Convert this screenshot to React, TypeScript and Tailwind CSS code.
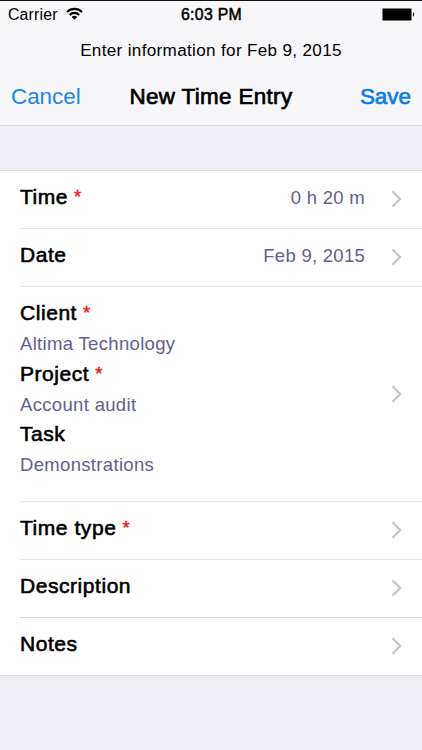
import type { ReactNode } from 'react'

interface FieldProps {
  label: string
  required?: boolean
}

interface RowProps {
  children: ReactNode
  value?: string
  divider?: string
  tall?: boolean
}

const Chevron = () => (
  <svg
    className="mb-px h-[18px] w-[12px] shrink-0"
    viewBox="0 0 12 18"
    fill="none"
    stroke="#c5c5ca"
    strokeWidth="2.3"
    aria-hidden="true"
  >
    <path d="M1.5 1.2 9.2 9 1.5 16.8" />
  </svg>
)

const WifiIcon = () => (
  <svg className="-mt-[3px] h-[13px] w-[17px]" viewBox="0 0 17 13" aria-hidden="true">
    <g fill="none" stroke="#000" strokeWidth="2.1">
      <path d="M1 4.9a10.7 10.7 0 0 1 15 0" />
      <path d="M3.7 7.9a6.8 6.8 0 0 1 9.6 0" />
    </g>
    <path d="M5.7 10a4 4 0 0 1 5.6 0L8.5 12.8z" />
  </svg>
)

const BatteryIcon = () => (
  <svg className="-mt-px h-[13px] w-[33px]" viewBox="0 0 33 13" aria-hidden="true">
    <rect x="0.5" y="0.5" width="29" height="12" rx="1" fill="#000" stroke="#77777a" />
    <path d="M31 4.3c1.5.6 1.5 3.8 0 4.4z" />
  </svg>
)

const Field = ({ label, required }: FieldProps) => (
  <div className="text-[21px] leading-[30px] tracking-[0.55px] [-webkit-text-stroke:0.6px_#000]">
    {label}
    {required && (
      <span className="ml-[6px] align-[1px] text-[18.5px] leading-none text-[#f01820] [-webkit-text-stroke:0.5px_#f01820]">
        *
      </span>
    )}
  </div>
)

const FieldValue = ({ children }: { children: ReactNode }) => (
  <div className="pt-px text-[18.5px] leading-[29.5px] tracking-[0.33px] text-[#645e91]">
    {children}
  </div>
)

const Row = ({ children, value, divider = 'border-[#e6e6e9]', tall }: RowProps) => (
  <div
    className={
      'ml-5 flex justify-between border-b pr-[19px] ' +
      (tall ? 'h-[215px] ' : 'h-[58px] ') +
      divider
    }
  >
    <div className="pt-[11px]">{children}</div>
    <div className="flex items-center">
      {value && (
        <span className="mr-[26px] -mt-[3px] text-[18.5px] tracking-[0.27px] text-[#645e91]">
          {value}
        </span>
      )}
      <Chevron />
    </div>
  </div>
)

const App = () => {
  return (
    <div className="h-[750px] w-[422px] overflow-hidden bg-[#efeef4] font-['Liberation_Sans',Arial,sans-serif] text-black">
      <header className="h-[126px] border-t border-b border-t-[#111116] border-b-[#dcdbe1] bg-[#f7f7f9]">
        <div className="grid h-[28px] grid-cols-3 items-center pr-[7px] pl-2 text-[15.8px]">
          <div className="flex items-center gap-[8px] tracking-[0.2px]">
            Carrier
            <WifiIcon />
          </div>
          <div className="text-center tracking-[0.3px] whitespace-nowrap [-webkit-text-stroke:0.5px_#000]">
            6:03 PM
          </div>
          <div className="flex justify-end">
            <BatteryIcon />
          </div>
        </div>
        <p className="h-[43px] text-center text-[17.1px] leading-[43px] tracking-[0.33px]">
          Enter information for Feb 9, 2015
        </p>
        <nav className="flex h-[49px] items-center justify-between px-[11px] text-[22.4px]">
          <a href="#" className="w-[75px] text-[#1a82f7]">
            Cancel
          </a>
          <h1 className="tracking-[0.35px] [-webkit-text-stroke:0.7px_#000]">New Time Entry</h1>
          <a href="#" className="w-[75px] text-right text-[#0b7bf5] [-webkit-text-stroke:0.7px_#0b7bf5]">
            Save
          </a>
        </nav>
      </header>

      <main className="mt-[44px] h-[506px] border-t border-b border-t-[#dcdbe1] border-b-[#e0dfe5] bg-white">
        <Row value="0 h 20 m">
          <Field label="Time" required />
        </Row>
        <Row value="Feb 9, 2015">
          <Field label="Date" />
        </Row>
        <Row tall>
          <Field label="Client" required />
          <FieldValue>Altima Technology</FieldValue>
          <Field label="Project" required />
          <FieldValue>Account audit</FieldValue>
          <Field label="Task" />
          <FieldValue>Demonstrations</FieldValue>
        </Row>
        <Row>
          <Field label="Time type" required />
        </Row>
        <Row divider="border-[#d2d2d5]">
          <Field label="Description" />
        </Row>
        <Row divider="border-transparent">
          <Field label="Notes" />
        </Row>
      </main>
    </div>
  )
}

export default App
